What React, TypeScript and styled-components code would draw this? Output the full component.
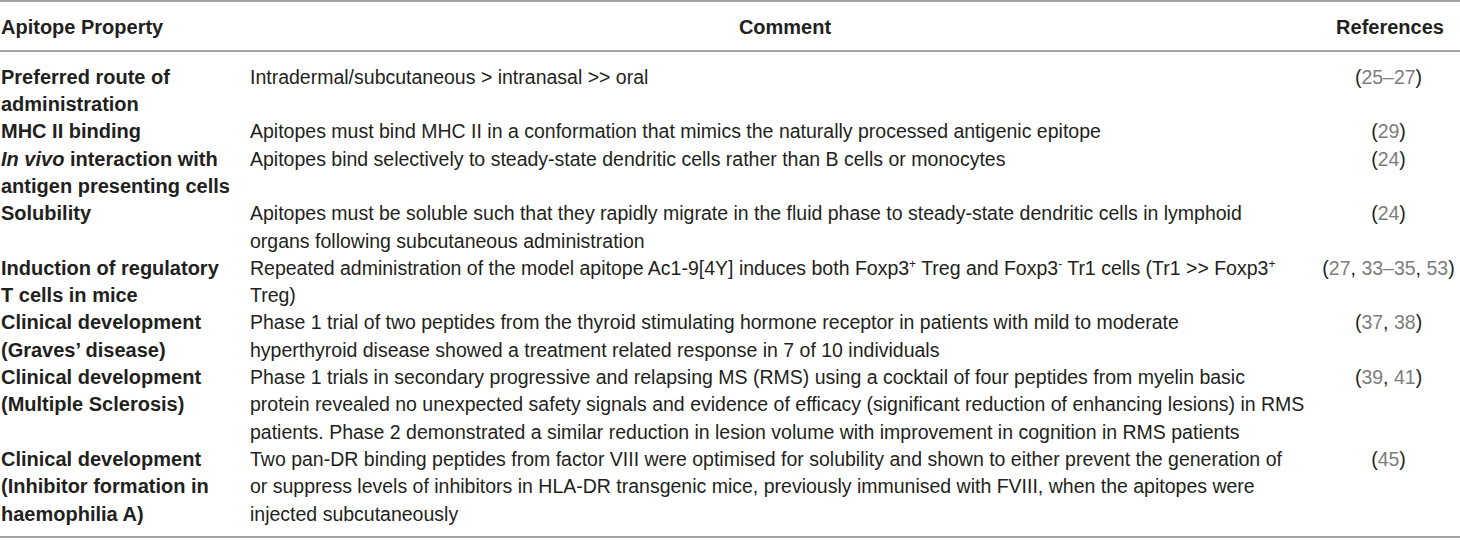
import React from "react";
import styled, { createGlobalStyle } from "styled-components";

const Global = createGlobalStyle`
  html, body { margin: 0; padding: 0; background: #ffffff; }
  body { font-family: "Liberation Sans", Arial, Helvetica, sans-serif; color: #231f20; }
`;

const Table = styled.table`
  width: 1460px;
  border-collapse: collapse;
  table-layout: fixed;
  font-size: 20px;
  line-height: 27.3px;
  border-top: 2px solid #a3a3a3;
  border-bottom: 2px solid #a3a3a3;
`;

const HeadRow = styled.tr`
  border-bottom: 2px solid #a3a3a3;
`;

const Th = styled.th<{ $align?: "left" | "center" }>`
  text-align: ${(p) => p.$align ?? "left"};
  font-weight: 700;
  padding: 12px 0 8.5px ${(p) => (p.$align === "center" ? "0" : "1px")};
  vertical-align: top;
`;

const Body = styled.tbody`
  tr:first-child td { padding-top: 12px; }
  tr:last-child td { padding-bottom: 8.5px; }
`;

const Prop = styled.td`
  font-weight: 700;
  vertical-align: top;
  padding: 0 0 0 1px;
`;

const Comment = styled.td`
  vertical-align: top;
  padding: 0;
  white-space: nowrap;
  font-size: 19.5px;
`;

const Refs = styled.td`
  vertical-align: top;
  text-align: center;
  padding: 0 3px 0 0;
  white-space: nowrap;
  font-size: 19.5px;
`;

const Line = styled.span`
  display: block;
`;

const Num = styled.span`
  color: #7d7d7d;
`;

const Sup = styled.sup`
  font-size: 12px;
  line-height: 0;
  vertical-align: 7px;
`;

const Em = styled.em`
  font-style: italic;
`;

type Row = {
  prop: React.ReactNode[];
  comment: React.ReactNode[];
  refs: React.ReactNode;
};

const R = ({ parts }: { parts: string[] }) => (
  <>
    (
    {parts.map((p, i) =>
      /\d/.test(p) ? <Num key={i}>{p}</Num> : <React.Fragment key={i}>{p}</React.Fragment>
    )}
    )
  </>
);

const rows: Row[] = [
  {
    prop: ["Preferred route of", "administration"],
    comment: ["Intradermal/subcutaneous > intranasal >> oral"],
    refs: <R parts={["25–27"]} />,
  },
  {
    prop: ["MHC II binding"],
    comment: [
      "Apitopes must bind MHC II in a conformation that mimics the naturally processed antigenic epitope",
    ],
    refs: <R parts={["29"]} />,
  },
  {
    prop: [
      <>
        <Em>In vivo</Em> interaction with
      </>,
      "antigen presenting cells",
    ],
    comment: [
      "Apitopes bind selectively to steady-state dendritic cells rather than B cells or monocytes",
    ],
    refs: <R parts={["24"]} />,
  },
  {
    prop: ["Solubility"],
    comment: [
      "Apitopes must be soluble such that they rapidly migrate in the fluid phase to steady-state dendritic cells in lymphoid",
      "organs following subcutaneous administration",
    ],
    refs: <R parts={["24"]} />,
  },
  {
    prop: ["Induction of regulatory", "T cells in mice"],
    comment: [
      <>
        Repeated administration of the model apitope Ac1-9[4Y] induces both Foxp3
        <Sup>+</Sup> Treg and Foxp3<Sup>-</Sup> Tr1 cells (Tr1 &gt;&gt; Foxp3
        <Sup>+</Sup>
      </>,
      "Treg)",
    ],
    refs: <R parts={["27", ", ", "33–35", ", ", "53"]} />,
  },
  {
    prop: ["Clinical development", "(Graves’ disease)"],
    comment: [
      "Phase 1 trial of two peptides from the thyroid stimulating hormone receptor in patients with mild to moderate",
      "hyperthyroid disease showed a treatment related response in 7 of 10 individuals",
    ],
    refs: <R parts={["37", ", ", "38"]} />,
  },
  {
    prop: ["Clinical development", "(Multiple Sclerosis)"],
    comment: [
      "Phase 1 trials in secondary progressive and relapsing MS (RMS) using a cocktail of four peptides from myelin basic",
      "protein revealed no unexpected safety signals and evidence of efficacy (significant reduction of enhancing lesions) in RMS",
      "patients. Phase 2 demonstrated a similar reduction in lesion volume with improvement in cognition in RMS patients",
    ],
    refs: <R parts={["39", ", ", "41"]} />,
  },
  {
    prop: ["Clinical development", "(Inhibitor formation in", "haemophilia A)"],
    comment: [
      "Two pan-DR binding peptides from factor VIII were optimised for solubility and shown to either prevent the generation of",
      "or suppress levels of inhibitors in HLA-DR transgenic mice, previously immunised with FVIII, when the apitopes were",
      "injected subcutaneously",
    ],
    refs: <R parts={["45"]} />,
  },
];

export default function App() {
  return (
    <>
      <Global />
      <Table>
        <colgroup>
          <col style={{ width: 250 }} />
          <col style={{ width: 1070 }} />
          <col style={{ width: 140 }} />
        </colgroup>
        <thead>
          <HeadRow>
            <Th>Apitope Property</Th>
            <Th $align="center">Comment</Th>
            <Th $align="center">References</Th>
          </HeadRow>
        </thead>
        <Body>
          {rows.map((r, i) => (
            <tr key={i}>
              <Prop>
                {r.prop.map((l, j) => (
                  <Line key={j}>{l}</Line>
                ))}
              </Prop>
              <Comment>
                {r.comment.map((l, j) => (
                  <Line key={j}>{l}</Line>
                ))}
              </Comment>
              <Refs>{r.refs}</Refs>
            </tr>
          ))}
        </Body>
      </Table>
    </>
  );
}
